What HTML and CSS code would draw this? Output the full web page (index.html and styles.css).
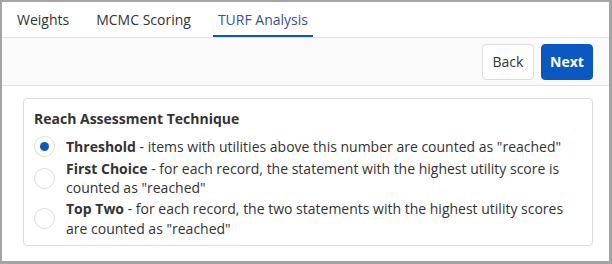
FILE: index.html
```html
<!DOCTYPE html>
<html>
<head>
<meta charset="utf-8">
<link rel="stylesheet" href="styles.css">
</head>
<body>
<div class="window">
  <nav class="tabs">
    <span class="tab">Weights</span>
    <span class="tab">MCMC Scoring</span>
    <span class="tab active">TURF Analysis</span>
  </nav>
  <div class="toolbar">
    <button class="btn btn-back">Back</button>
    <button class="btn btn-next">Next</button>
  </div>
  <div class="content">
    <div class="card">
      <div class="card-title">Reach Assessment Technique</div>
      <div class="options">
        <label class="option">
          <span class="radio checked"></span>
          <span class="option-text"><b>Threshold</b> - items with utilities above this number are counted as "reached"</span>
        </label>
        <label class="option">
          <span class="radio"></span>
          <span class="option-text"><b>First Choice</b> - for each record, the statement with the highest utility score is counted as "reached"</span>
        </label>
        <label class="option">
          <span class="radio"></span>
          <span class="option-text"><b>Top Two</b> - for each record, the two statements with the highest utility scores are counted as "reached"</span>
        </label>
      </div>
    </div>
  </div>
</div>
</body>
</html>
```
FILE: styles.css
```css
* { box-sizing: border-box; }
html, body { margin: 0; padding: 0; }
body {
  width: 612px;
  height: 264px;
  font-family: "Open Sans", "Liberation Sans", sans-serif;
  font-size: 14px;
  color: #333;
  background: #a4a4a4;
}
.window {
  width: 612px;
  height: 264px;
  border-style: solid;
  border-color: #a4a4a4;
  border-width: 2px 3px 3px 2px;
  background: #fff;
  display: flex;
  flex-direction: column;
}
.tabs {
  height: 36px;
  display: flex;
  gap: 17px;
  padding-left: 10px;
  border-bottom: 1px solid #e2e2e2;
}
.tab {
  display: flex;
  align-items: center;
  padding: 2px 5px 0;
  border-bottom: 2px solid transparent;
  color: #333;
  line-height: 20px;
}
.tab.active {
  color: #38519a;
  border-bottom-color: #0a58c2;
}
.toolbar {
  height: 48px;
  background: #fafafa;
  border-bottom: 1px solid #e2e2e2;
  display: flex;
  justify-content: flex-end;
  align-items: flex-start;
  gap: 7px;
  padding: 6px 16px 0 0;
}
.btn {
  height: 36px;
  min-width: 52px;
  padding: 0 8px;
  border-radius: 4px;
  font-family: inherit;
  font-size: 14px;
  line-height: 20px;
}
.btn-back {
  background: #fff;
  border: 1px solid #dcdcdc;
  color: #333;
}
.btn-next {
  background: #0a58c2;
  border: 1px solid #0a58c2;
  color: #fff;
  font-weight: 700;
}
.content {
  padding: 12px 16px 0 21px;
}
.card {
  border: 1px solid #dcdcdc;
  border-radius: 4px;
  padding: 10px 12px 10px 10px;
  height: 148px;
}
.card-title {
  font-weight: 700;
  line-height: 20px;
  margin-bottom: 7px;
}
.options {
  display: flex;
  flex-direction: column;
  gap: 1.5px;
}
.option {
  display: flex;
  align-items: center;
  line-height: 19.5px;
}
.option b { font-weight: 700; }
.radio {
  flex: none;
  width: 21px;
  height: 21px;
  border-radius: 50%;
  border: 1px solid #dcdcdc;
  background: #fff;
  margin-right: 11px;
  display: flex;
  align-items: center;
  justify-content: center;
}
.radio.checked::after {
  content: "";
  width: 9px;
  height: 9px;
  border-radius: 50%;
  background: #0a58c2;
}
.option-text {
  flex: 1;
}
```
